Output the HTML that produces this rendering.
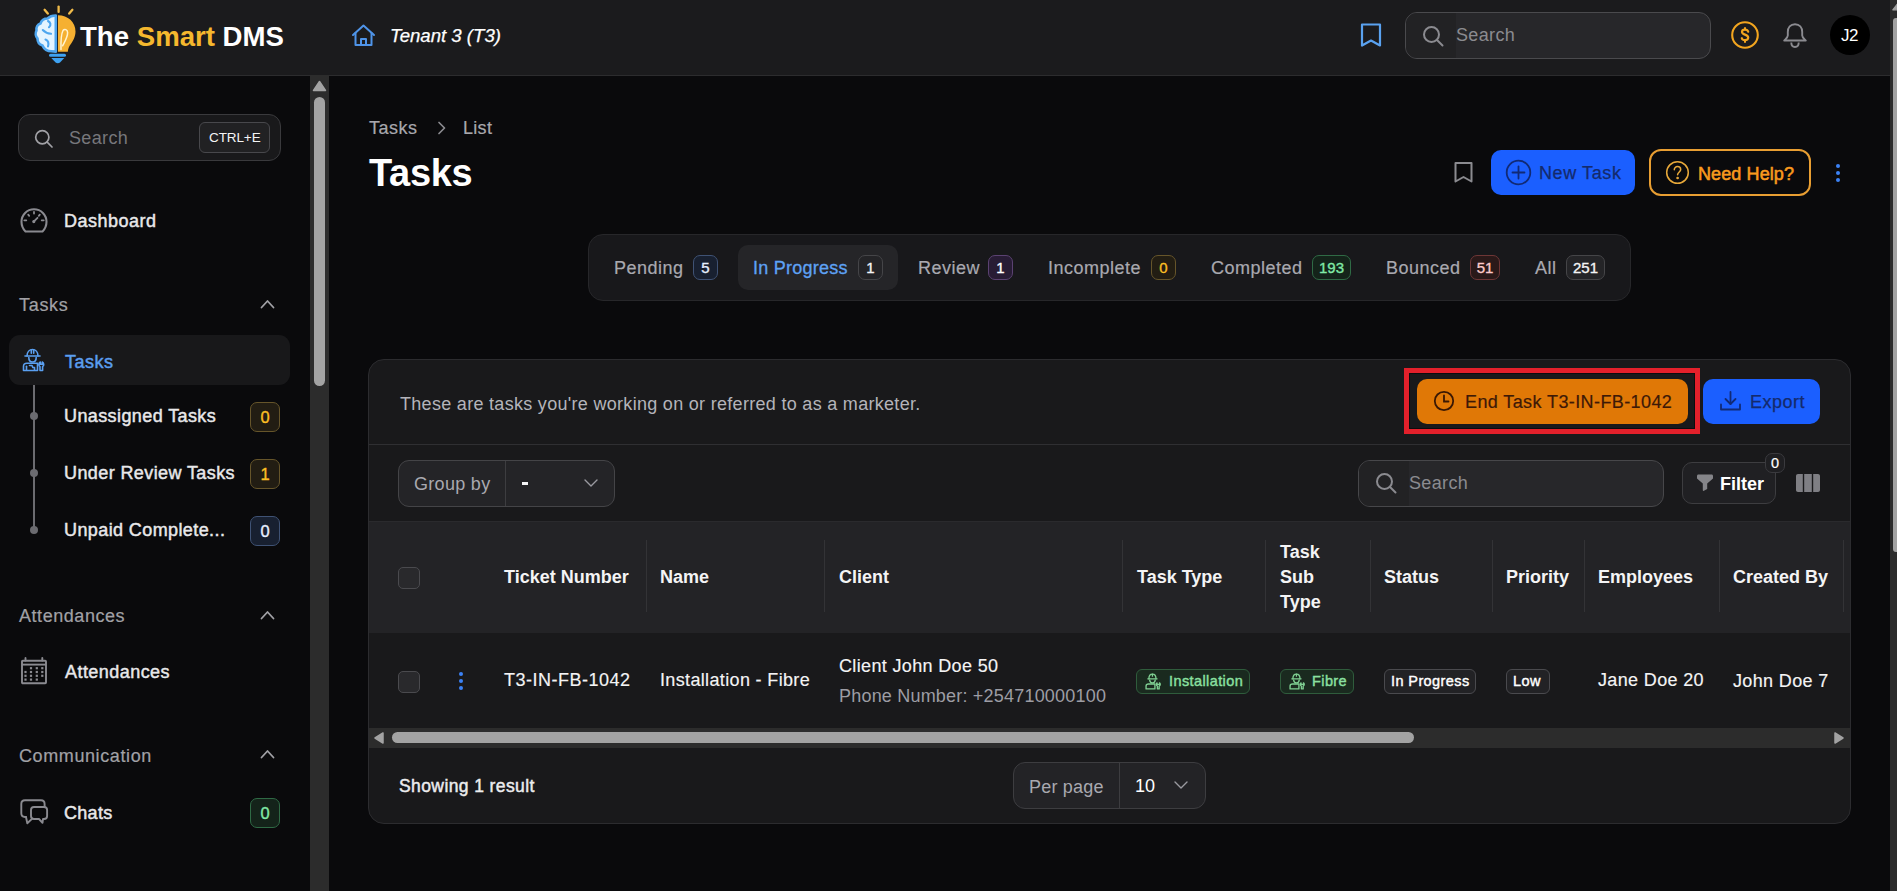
<!DOCTYPE html>
<html><head><meta charset="utf-8">
<style>
*{box-sizing:border-box;margin:0;padding:0}
html,body{width:1897px;height:891px;overflow:hidden;background:#0a0a0c;font-family:"Liberation Sans",sans-serif;color:#f4f4f5}
.abs{position:absolute}
.t{position:absolute;white-space:nowrap;line-height:1}
#hdr{position:absolute;left:0;top:0;width:1890px;height:76px;background:#1b1b1d;border-bottom:1px solid #2c2c2e}
#side{position:absolute;left:0;top:76px;width:310px;height:815px;background:#0a0a0c}
#strack{position:absolute;left:310px;top:75px;width:19px;height:816px;background:#2c2c2c}
#pstrack{position:absolute;left:1890px;top:0;width:7px;height:891px;background:#2c2c2c}
.box{position:absolute;border:1px solid #3d3d40;border-radius:12px}
.badge{position:absolute;border-radius:7px;border:1px solid;font-weight:normal;-webkit-text-stroke:0.35px currentColor;font-size:15px;display:flex;align-items:center;justify-content:center;line-height:1}
.yb{border-color:#66552a;background:#221d13;color:#fbbf24}
.bb{border-color:#3f5274;background:#182030;color:#e6efff}
.gb{border-color:#2f6a45;background:#14231a;color:#80eaa6}
.pb{border-color:#5b4272;background:#281c35;color:#fff}
.rb{border-color:#6e3636;background:#2a1919;color:#fecaca}
.th{font-size:18px;font-weight:bold;color:#f4f4f5}
.td{font-size:18px;color:#f4f4f5;letter-spacing:0.35px;-webkit-text-stroke:0.15px currentColor}
.vd{top:540px;width:1px;height:72px;background:#333336}
.cb{width:22px;height:22px;border:1px solid #4a4a4e;border-radius:5px;background:#29292c}
.tb{top:669px;height:25px;border:1px solid;border-radius:6px}
.gbadge{border-color:#2f5c3c;background:#1a2a1f}
.nbadge{border-color:#4a4a4e;background:#222225}
.bt{top:674px;font-size:14.5px;font-weight:normal;-webkit-text-stroke:0.4px currentColor;letter-spacing:0.4px}
.sb{font-weight:normal;-webkit-text-stroke:0.45px currentColor}
.tab{font-size:18px;letter-spacing:0.5px;-webkit-text-stroke:0.2px currentColor}
.nb{border-color:#454548;background:#242427;color:#f4f4f5}
</style></head><body>

<!-- HEADER -->
<div id="hdr"></div>
<div id="pstrack"></div>
<div class="abs" style="left:1893px;top:18px;width:4px;height:534px;background:#a3a3a3;border-radius:3px 0 0 3px"></div>
<svg class="abs" style="left:1890px;top:0" width="7" height="12" viewBox="0 0 7 12"><path d="M2.8 9.8 L8.5 2.5 L8.5 9.8 Z" fill="#a3a3a3" stroke="#a3a3a3" stroke-width="1.2" stroke-linejoin="round"/></svg>

<!-- logo -->
<svg class="abs" style="left:33px;top:4px" width="46" height="62" viewBox="0 0 46 62">
  <g stroke="#f0bb4a" stroke-width="2.3" stroke-linecap="round">
    <line x1="11.6" y1="5.8" x2="14.8" y2="9.6"/><line x1="25.6" y1="2.6" x2="25.6" y2="7.9"/><line x1="39.4" y1="5.8" x2="36.2" y2="9.6"/>
  </g>
  <path d="M25 11.3 C 35 11.5 42.5 18 42.5 27.5 C 42.5 33 40 37 37.5 40.5 C 36 42.5 35 45 34.8 47.8 L 25 47.8 Z" fill="#f5b031"/>
  <path d="M28 45.5 C 27.8 38 28.2 30 30 26.5 C 31.5 24.5 34.5 25.5 34.6 28.5 C 34.8 33 31.5 38 29.6 41.8" stroke="#fff3cf" stroke-width="1.5" fill="none" stroke-linecap="round"/>
  <path d="M22.8 11.5 C 19.5 11.5 16.5 12.5 14.5 14.5 C 11.5 14.5 8.5 16.5 7.5 19.5 C 4.5 20.5 3 23.5 3.5 26.5 C 2.2 29 2.5 32.5 4.5 34.5 C 4.5 38 6.5 40.5 9.5 41.5 C 11 45 14.5 47.3 18.5 47.3 L 22.8 47.6 Z" fill="#e4f4ff" stroke="#4ea6ef" stroke-width="2.6" stroke-linejoin="round"/>
  <path d="M15 17 C 17.5 18.5 18.5 21 16 23.2 M 9.8 26 C 12 28.5 15 29.5 18 29.8 M 12.5 35.5 C 15 36.5 16 39 15 42.5" stroke="#4ea6ef" stroke-width="2.1" fill="none" stroke-linecap="round"/>
  <rect x="16" y="49.8" width="17" height="3" rx="1.5" fill="#3ea2f2"/>
  <path d="M18.3 54 L31.3 54 L27 58.6 C 25.8 59.6 23.8 59.6 22.6 58.6 Z" fill="#3ea2f2"/>
</svg>
<div class="t" style="left:80px;top:23px;font-size:27.6px;font-weight:bold;color:#fff">The <span style="color:#f5b82e">Smart</span> DMS</div>

<!-- home -->
<svg class="abs" style="left:351px;top:24px" width="25" height="23" viewBox="0 0 25 23" fill="none" stroke="#4f94e8" stroke-width="2" stroke-linejoin="round" stroke-linecap="round">
  <path d="M2 11 L12.5 1.5 L23 11"/><path d="M4.5 9 V21 H20.5 V9"/><path d="M10 21 V15 H15 V21"/>
</svg>
<div class="t" style="left:390px;top:27px;font-size:18.6px;font-style:italic;color:#fff;-webkit-text-stroke:0.25px #fff">Tenant 3 (T3)</div>

<!-- bookmark blue -->
<svg class="abs" style="left:1359px;top:22px" width="24" height="26" viewBox="0 0 24 26" fill="none" stroke="#5aa2f0" stroke-width="2.2" stroke-linejoin="round">
  <path d="M3 2.5 H21 V23.5 L12 18.5 L3 23.5 Z"/>
</svg>
<!-- header search -->
<div class="box" style="left:1405px;top:12px;width:306px;height:47px;background:#27272a;border-color:#4a4a4d"></div>
<div class="abs" style="left:1406px;top:13px;width:50px;height:45px;background:#222224;border-radius:11px 0 0 11px"></div>
<svg class="abs" style="left:1422px;top:25px" width="23" height="22" viewBox="0 0 23 22" fill="none" stroke="#8b8b90" stroke-width="2" stroke-linecap="round">
  <circle cx="9.5" cy="9.5" r="7.5"/><line x1="15" y1="15" x2="20.5" y2="20.5"/>
</svg>
<div class="t" style="left:1456px;top:26px;font-size:18px;letter-spacing:0.35px;color:#8b8b90">Search</div>

<!-- dollar -->
<svg class="abs" style="left:1730px;top:20px" width="30" height="30" viewBox="0 0 30 30" fill="none" stroke="#f2a51f" stroke-width="2.1" stroke-linecap="round">
  <circle cx="15" cy="15" r="12.8"/>
  <path d="M18.2 11.8 C 17.8 10.4 16.6 9.7 15 9.7 C 13.2 9.7 12 10.6 12 12 C 12 15 18.2 14.3 18.2 17.6 C 18.2 19.1 16.9 20.2 15 20.2 C 13.3 20.2 12.2 19.5 11.8 18.2" stroke-width="2.2"/>
  <line x1="15" y1="8" x2="15" y2="9.4" stroke-width="2"/><line x1="15" y1="20.6" x2="15" y2="22" stroke-width="2"/>
</svg>
<!-- bell -->
<svg class="abs" style="left:1782px;top:23px" width="26" height="27" viewBox="0 0 26 27" fill="none" stroke="#8b8b90" stroke-width="1.9" stroke-linejoin="round">
  <path d="M13 1.2 C 8.5 1.2 5.8 4.5 5.8 9 V12.5 C 5.8 14.5 3.5 16 2.2 17.5 H23.8 C 22.5 16 20.2 14.5 20.2 12.5 V9 C 20.2 4.5 17.5 1.2 13 1.2 Z"/>
  <path d="M9.3 19.5 C 9.3 22.3 10.9 24 13 24 C 15.1 24 16.7 22.3 16.7 19.5"/>
</svg>
<!-- avatar -->
<div class="abs" style="left:1830px;top:15px;width:40px;height:40px;border-radius:50%;background:#000"></div>
<div class="t" style="left:1841px;top:27px;font-size:17px;color:#fff;letter-spacing:-0.5px">J2</div>

<!-- SIDEBAR -->
<div id="side"></div>
<div id="strack"></div>
<svg class="abs" style="left:312px;top:80px" width="15" height="12" viewBox="0 0 15 12"><path d="M7.5 1.5 L13.5 10.5 H1.5 Z" fill="#a3a3a3" stroke="#a3a3a3" stroke-width="1.5" stroke-linejoin="round"/></svg>
<div class="abs" style="left:314px;top:97px;width:11px;height:289px;background:#a3a3a3;border-radius:6px"></div>

<!-- sidebar search -->
<div class="box" style="left:18px;top:114px;width:263px;height:47px;background:#19191b;border-color:#3a3a3d"></div>
<svg class="abs" style="left:34px;top:129px" width="20" height="19" viewBox="0 0 20 19" fill="none" stroke="#a1a1a6" stroke-width="1.7" stroke-linecap="round">
  <circle cx="8.3" cy="8.3" r="6.6"/><line x1="13.2" y1="13.2" x2="18" y2="18"/>
</svg>
<div class="t" style="left:69px;top:129px;font-size:18px;letter-spacing:0.35px;color:#77777c">Search</div>
<div class="abs" style="left:199px;top:122px;width:71px;height:31px;border:1px solid #48484c;border-radius:6px;background:#212123"></div>
<div class="t" style="left:209px;top:131px;font-size:13.5px;color:#f4f4f5;letter-spacing:-0.1px">CTRL+E</div>

<!-- dashboard -->
<svg class="abs" style="left:20px;top:208px" width="28" height="26" viewBox="0 0 28 26" fill="none" stroke="#8a8a90" stroke-width="2.1" stroke-linecap="round">
  <path d="M5.5 23.5 C 3 21 1.5 17.5 1.5 13.8 C 1.5 6.8 7 1.3 14 1.3 C 21 1.3 26.5 6.8 26.5 13.8 C 26.5 17.5 25 21 22.5 23.5 Z"/>
  <line x1="14" y1="3.9" x2="14" y2="5.6" stroke-width="1.8"/><line x1="8.2" y1="6.6" x2="9.2" y2="7.8" stroke-width="1.8"/><line x1="19.8" y1="6.6" x2="18.8" y2="7.8" stroke-width="1.8"/>
  <line x1="4.3" y1="12.3" x2="6.3" y2="12.3" stroke-width="1.8"/><line x1="21.7" y1="12.3" x2="23.7" y2="12.3" stroke-width="1.8"/>
  <line x1="14.2" y1="13.2" x2="17.5" y2="9.8" stroke-width="1.8"/><circle cx="13.8" cy="13.6" r="1" fill="#8a8a90" stroke-width="1.2"/>
</svg>
<div class="t sb" style="left:64px;top:212px;font-size:18px;letter-spacing:0.5px;color:#e8e8ea">Dashboard</div>

<!-- Tasks section -->
<div class="t" style="left:19px;top:296px;-webkit-text-stroke:0.2px #a1a1a6;font-size:18px;letter-spacing:0.7px;color:#a1a1a6">Tasks</div>
<svg class="abs" style="left:259px;top:298px" width="17" height="12" viewBox="0 0 17 12" fill="none" stroke="#a1a1a6" stroke-width="1.8" stroke-linecap="round" stroke-linejoin="round"><path d="M2.5 9.5 L8.5 3 L14.5 9.5"/></svg>
<div class="abs" style="left:9px;top:335px;width:281px;height:50px;background:#18181a;border-radius:11px"></div>
<svg class="abs" style="left:22px;top:348px" width="24" height="24" viewBox="0 0 24 24" fill="none" stroke="#5a9ff0" stroke-width="1.6" stroke-linejoin="round" stroke-linecap="round">
  <path d="M5 8 C 5 4 7.5 1.5 10.5 1.5 C 13.5 1.5 16 4 16 8"/>
  <path d="M3 8 H18"/><path d="M9.3 2 V5.2 M11.7 2 V5.2"/>
  <path d="M6.8 9.5 C 6.8 12.5 8.5 14 10.5 14 C 12.5 14 14.2 12.5 14.2 9.5"/>
  <path d="M1.5 22.5 V18.5 C 1.5 16.5 3 15.3 5 15.3 H15.5 V22.5 Z"/>
  <path d="M4.5 18.3 V22" /><path d="M7.5 17.5 H10 L10.8 19.5 H12.5 V22"/>
  <path d="M18.3 14 C 16.6 14.8 16.3 17.6 18 18.6 V22.5 H20.6 V18.6 C 22.3 17.6 22 14.8 20.3 14 V16.3 H18.3 Z"/>
</svg>
<div class="t sb" style="left:65px;top:353px;font-size:18px;letter-spacing:0.5px;color:#5b9ef0">Tasks</div>
<div class="abs" style="left:33px;top:385px;width:2px;height:145px;background:#6b6b70"></div>
<div class="abs" style="left:30px;top:412px;width:8px;height:8px;border-radius:50%;background:#6b6b70"></div>
<div class="abs" style="left:30px;top:469px;width:8px;height:8px;border-radius:50%;background:#6b6b70"></div>
<div class="abs" style="left:30px;top:526px;width:8px;height:8px;border-radius:50%;background:#6b6b70"></div>
<div class="t sb" style="left:64px;top:407px;font-size:18px;letter-spacing:0.4px;color:#e8e8ea">Unassigned Tasks</div>
<div class="t sb" style="left:64px;top:464px;font-size:18px;letter-spacing:0.4px;color:#e8e8ea">Under Review Tasks</div>
<div class="t sb" style="left:64px;top:521px;font-size:18px;letter-spacing:0.4px;color:#e8e8ea">Unpaid Complete...</div>
<div class="badge yb" style="left:250px;top:402px;width:30px;height:30px;font-size:16.5px">0</div>
<div class="badge yb" style="left:250px;top:459px;width:30px;height:30px;font-size:16.5px">1</div>
<div class="badge bb" style="left:250px;top:516px;width:30px;height:30px;font-size:16.5px">0</div>

<!-- Attendances -->
<div class="t" style="left:19px;top:607px;-webkit-text-stroke:0.2px #a1a1a6;font-size:18px;letter-spacing:0.55px;color:#a1a1a6">Attendances</div>
<svg class="abs" style="left:259px;top:609px" width="17" height="12" viewBox="0 0 17 12" fill="none" stroke="#a1a1a6" stroke-width="1.8" stroke-linecap="round" stroke-linejoin="round"><path d="M2.5 9.5 L8.5 3 L14.5 9.5"/></svg>
<svg class="abs" style="left:20px;top:656px" width="28" height="30" viewBox="0 0 28 30" fill="none" stroke="#8a8a90" stroke-width="1.9">
  <rect x="2" y="4.7" width="24" height="22.6" rx="0.8"/><line x1="2" y1="8.6" x2="26" y2="8.6"/>
  <line x1="5.5" y1="2" x2="5.5" y2="4.5" stroke-linecap="round"/><line x1="22.3" y1="2" x2="22.3" y2="4.5" stroke-linecap="round"/>
  <g fill="#8a8a90" stroke="none"><rect x="9.9" y="11.1" width="2.2" height="2.2"/><rect x="15.7" y="11.1" width="2.2" height="2.2"/><rect x="21.2" y="11.1" width="2.2" height="2.2"/><rect x="4.4" y="14.9" width="2.2" height="2.2"/><rect x="9.9" y="14.9" width="2.2" height="2.2"/><rect x="15.7" y="14.9" width="2.2" height="2.2"/><rect x="21.2" y="14.9" width="2.2" height="2.2"/><rect x="4.4" y="18.7" width="2.2" height="2.2"/><rect x="9.9" y="18.7" width="2.2" height="2.2"/><rect x="15.7" y="18.7" width="2.2" height="2.2"/><rect x="21.2" y="18.7" width="2.2" height="2.2"/><rect x="4.4" y="22.5" width="2.2" height="2.2"/><rect x="9.9" y="22.5" width="2.2" height="2.2"/><rect x="15.7" y="22.5" width="2.2" height="2.2"/></g>
</svg>
<div class="t sb" style="left:65px;top:663px;font-size:18px;letter-spacing:0.45px;color:#e8e8ea">Attendances</div>

<!-- Communication -->
<div class="t" style="left:19px;top:747px;-webkit-text-stroke:0.2px #a1a1a6;font-size:18px;letter-spacing:0.6px;color:#a1a1a6">Communication</div>
<svg class="abs" style="left:259px;top:748px" width="17" height="12" viewBox="0 0 17 12" fill="none" stroke="#a1a1a6" stroke-width="1.8" stroke-linecap="round" stroke-linejoin="round"><path d="M2.5 9.5 L8.5 3 L14.5 9.5"/></svg>
<svg class="abs" style="left:20px;top:799px" width="29" height="27" viewBox="0 0 29 27" fill="none" stroke="#8a8a90" stroke-width="1.9" stroke-linejoin="round" stroke-linecap="round">
  <path d="M6 18 H5 C 2.8 18 1.3 16.5 1.3 14.3 V5 C 1.3 2.8 2.8 1.3 5 1.3 H21 C 23.2 1.3 24.6 2.8 24.6 5 V8"/>
  <path d="M6 18 L7.3 24.3 L12.2 19.6"/>
  <path d="M14 8 H24 C 25.8 8 27.1 9.3 27.1 11 V17 C 27.1 18.7 25.8 20 24 20 H23 L22.5 23.8 L19 20 H14 C 12.2 20 11 18.7 11 17 V11 C 11 9.3 12.2 8 14 8 Z"/>
</svg>
<div class="t sb" style="left:64px;top:804px;font-size:18px;letter-spacing:0.3px;color:#e8e8ea">Chats</div>
<div class="badge gb" style="left:250px;top:798px;width:30px;height:30px;font-size:16.5px">0</div>

<!-- MAIN -->
<div class="t" style="left:369px;top:119px;font-size:18px;letter-spacing:0.5px;color:#a8a8ae;-webkit-text-stroke:0.2px #a8a8ae">Tasks</div>
<svg class="abs" style="left:436px;top:120px" width="12" height="16" viewBox="0 0 12 16" fill="none" stroke="#8b8b90" stroke-width="1.7" stroke-linecap="round" stroke-linejoin="round"><path d="M3 2.5 L8.5 8 L3 13.5"/></svg>
<div class="t" style="left:463px;top:119px;font-size:18px;letter-spacing:0.3px;color:#a8a8ae;-webkit-text-stroke:0.2px #a8a8ae">List</div>
<div class="t" style="left:369px;top:154px;font-size:38px;font-weight:bold;color:#fff;letter-spacing:-0.3px">Tasks</div>

<!-- bookmark gray -->
<svg class="abs" style="left:1453px;top:161px" width="21" height="23" viewBox="0 0 21 23" fill="none" stroke="#8b8b90" stroke-width="2" stroke-linejoin="round">
  <path d="M2.5 2 H18.5 V20.5 L10.5 16 L2.5 20.5 Z"/>
</svg>
<!-- New Task -->
<div class="abs" style="left:1491px;top:150px;width:144px;height:45px;background:#1b5fff;border-radius:10px"></div>
<svg class="abs" style="left:1505px;top:159px" width="27" height="27" viewBox="0 0 27 27" fill="none" stroke="#112a75" stroke-width="1.8" stroke-linecap="round">
  <circle cx="13.5" cy="13.5" r="11.8"/><line x1="13.5" y1="7.5" x2="13.5" y2="19.5"/><line x1="7.5" y1="13.5" x2="19.5" y2="13.5"/>
</svg>
<div class="t" style="left:1539px;top:164px;font-size:18px;letter-spacing:0.6px;color:#142a6c;-webkit-text-stroke:0.25px #142a6c">New Task</div>
<!-- Need Help -->
<div class="abs" style="left:1649px;top:149px;width:162px;height:47px;border:2px solid #e89e32;border-radius:12px;background:#0a0a0c"></div>
<svg class="abs" style="left:1665px;top:160px" width="25" height="25" viewBox="0 0 25 25" fill="none" stroke="#e8a93a" stroke-width="1.5" stroke-linecap="round">
  <circle cx="12.5" cy="12.5" r="10.8"/>
  <path d="M9.3 9.8 C 9.3 7.8 10.7 6.6 12.5 6.6 C 14.3 6.6 15.7 7.8 15.7 9.6 C 15.7 11.8 12.6 12.2 12.6 14.8"/>
  <circle cx="12.6" cy="18" r="0.6" fill="#e8a93a"/>
</svg>
<div class="t sb" style="left:1698px;top:165px;font-size:18px;letter-spacing:0.1px;color:#f99a1e;-webkit-text-stroke:0.55px #f99a1e">Need Help?</div>
<div class="abs" style="left:1835.5px;top:163.5px;width:4.2px;height:4.2px;border-radius:50%;background:#3b82f6"></div>
<div class="abs" style="left:1835.5px;top:170.5px;width:4.2px;height:4.2px;border-radius:50%;background:#3b82f6"></div>
<div class="abs" style="left:1835.5px;top:177.5px;width:4.2px;height:4.2px;border-radius:50%;background:#3b82f6"></div>

<!-- TABS -->
<div class="abs" style="left:588px;top:234px;width:1043px;height:67px;background:#18181b;border:1px solid #27272a;border-radius:15px"></div>
<div class="abs" style="left:738px;top:245px;width:160px;height:45px;background:#252528;border-radius:10px"></div>
<div class="t tab" style="left:614px;top:259px;color:#a9a9b0">Pending</div>
<div class="badge bb" style="left:693px;top:255px;width:25px;height:25px">5</div>
<div class="t tab" style="left:753px;top:259px;color:#5ea2f5;letter-spacing:0.25px;-webkit-text-stroke:0.3px #5ea2f5">In Progress</div>
<div class="badge nb" style="left:858px;top:255px;width:25px;height:25px">1</div>
<div class="t tab" style="left:918px;top:259px;color:#a9a9b0">Review</div>
<div class="badge pb" style="left:988px;top:255px;width:25px;height:25px">1</div>
<div class="t tab" style="left:1048px;top:259px;color:#a9a9b0">Incomplete</div>
<div class="badge yb" style="left:1151px;top:255px;width:25px;height:25px">0</div>
<div class="t tab" style="left:1211px;top:259px;color:#a9a9b0">Completed</div>
<div class="badge gb" style="left:1312px;top:255px;width:39px;height:25px">193</div>
<div class="t tab" style="left:1386px;top:259px;color:#a9a9b0">Bounced</div>
<div class="badge rb" style="left:1470px;top:255px;width:30px;height:25px">51</div>
<div class="t tab" style="left:1535px;top:259px;color:#a9a9b0">All</div>
<div class="badge nb" style="left:1566px;top:255px;width:39px;height:25px">251</div>

<!-- CARD -->
<div class="abs" style="left:368px;top:359px;width:1483px;height:465px;background:#19191b;border:1px solid #2c2c2f;border-radius:16px;overflow:hidden">
  <div class="abs" style="left:0;top:84px;width:1483px;height:1px;background:#2f2f32"></div>
  <div class="abs" style="left:0;top:161px;width:1483px;height:112px;background:#232326;border-top:1px solid #2a2a2d"></div>
  <div class="abs" style="left:0;top:368px;width:1483px;height:20px;background:#2c2c2c"></div>
</div>
<div class="t" style="left:400px;top:395px;font-size:18px;letter-spacing:0.3px;color:#b4b4ba">These are tasks you're working on or referred to as a marketer.</div>

<!-- red annotation + End Task -->
<div class="abs" style="left:1404px;top:368px;width:296px;height:66px;border:5px solid #e3202b"></div>
<div class="abs" style="left:1409px;top:373px;width:286px;height:56px;border:1px solid #0c0c0e"></div>
<div class="abs" style="left:1417px;top:379px;width:271px;height:45px;background:#e07806;border-radius:10px"></div>
<svg class="abs" style="left:1433px;top:390px" width="22" height="22" viewBox="0 0 22 22" fill="none" stroke="#3a1804" stroke-width="1.8" stroke-linecap="round">
  <circle cx="11" cy="11" r="9.2"/><path d="M11 5.5 V11.5 H15.5"/>
</svg>
<div class="t" style="left:1465px;top:393px;font-size:18px;color:#3d1906;letter-spacing:0.4px;-webkit-text-stroke:0.2px #3d1906">End Task T3-IN-FB-1042</div>
<!-- Export -->
<div class="abs" style="left:1703px;top:379px;width:117px;height:45px;background:#1b5fff;border-radius:10px"></div>
<svg class="abs" style="left:1719px;top:390px" width="23" height="22" viewBox="0 0 23 22" fill="none" stroke="#112a75" stroke-width="1.8" stroke-linecap="round" stroke-linejoin="round">
  <path d="M11.5 2 V14"/><path d="M6.5 9 L11.5 14 L16.5 9"/><path d="M2 14.5 V19.5 H21 V14.5"/>
</svg>
<div class="t" style="left:1750px;top:393px;font-size:18px;letter-spacing:0.5px;color:#142a6c;-webkit-text-stroke:0.25px #142a6c">Export</div>

<!-- toolbar -->
<div class="box" style="left:398px;top:460px;width:217px;height:47px;background:#242427;border-color:#444447;border-radius:11px"></div>
<div class="abs" style="left:505px;top:461px;width:1px;height:45px;background:#3d3d40"></div>
<div class="t" style="left:414px;top:475px;font-size:18px;letter-spacing:0.3px;color:#a9a9b0">Group by</div>
<div class="abs" style="left:521.8px;top:482.4px;width:6.5px;height:2.4px;background:#f4f4f5"></div>
<svg class="abs" style="left:583px;top:477px" width="16" height="12" viewBox="0 0 16 12" fill="none" stroke="#9a9aa0" stroke-width="1.4" stroke-linecap="round" stroke-linejoin="round"><path d="M2 3 L8 9 L14 3"/></svg>

<div class="box" style="left:1358px;top:460px;width:306px;height:47px;background:#27272a;border-color:#47474a"></div>
<div class="abs" style="left:1359px;top:461px;width:50px;height:45px;background:#222224;border-radius:11px 0 0 11px"></div>
<svg class="abs" style="left:1375px;top:472px" width="23" height="22" viewBox="0 0 23 22" fill="none" stroke="#8b8b90" stroke-width="2" stroke-linecap="round">
  <circle cx="9.5" cy="9.5" r="7.5"/><line x1="15" y1="15" x2="20.5" y2="20.5"/>
</svg>
<div class="t" style="left:1409px;top:474px;font-size:18px;letter-spacing:0.35px;color:#8b8b90">Search</div>

<div class="box" style="left:1682px;top:462px;width:94px;height:42px;background:#202023;border-color:#3d3d40;border-radius:10px"></div>
<svg class="abs" style="left:1696px;top:473px" width="18" height="19" viewBox="0 0 18 19"><path d="M2.5 1.5 H15.5 C 16.5 1.5 17 2.2 17 3 V5.5 L11.2 10.5 V16 L7.5 18 C 7 18 6.8 17.6 6.8 17 V10.5 L1 5.5 V3 C 1 2.2 1.5 1.5 2.5 1.5 Z" fill="#858589"/></svg>
<div class="t" style="left:1720px;top:475px;font-size:18px;font-weight:bold;color:#fff">Filter</div>
<div class="abs" style="left:1765px;top:453px;width:20px;height:20px;border-radius:7px;background:#1f1f22;border:1px solid #3a3a3e"></div>
<div class="t" style="left:1771px;top:456px;font-size:14.5px;color:#fff;-webkit-text-stroke:0.2px #fff">0</div>
<svg class="abs" style="left:1796px;top:474px" width="24" height="18" viewBox="0 0 24 18" fill="#7f7f84">
  <path d="M2 0 H6.8 V18 H2 C 0.9 18 0 17.1 0 16 V2 C 0 0.9 0.9 0 2 0 Z"/><rect x="8.2" y="0" width="7.6" height="18"/><path d="M17.2 0 H22 C 23.1 0 24 0.9 24 2 V16 C 24 17.1 23.1 18 22 18 H17.2 Z"/>
</svg>

<!-- TABLE HEADER -->
<div class="abs cb" style="left:398px;top:567px"></div>
<div class="t th" style="left:504px;top:568px">Ticket Number</div>
<div class="abs vd" style="left:646px"></div>
<div class="t th" style="left:660px;top:568px">Name</div>
<div class="abs vd" style="left:824px"></div>
<div class="t th" style="left:839px;top:568px">Client</div>
<div class="abs vd" style="left:1122px"></div>
<div class="t th" style="left:1137px;top:568px">Task Type</div>
<div class="abs vd" style="left:1265px"></div>
<div class="t th" style="left:1280px;top:540px;line-height:25px">Task<br>Sub<br>Type</div>
<div class="abs vd" style="left:1370px"></div>
<div class="t th" style="left:1384px;top:568px">Status</div>
<div class="abs vd" style="left:1492px"></div>
<div class="t th" style="left:1506px;top:568px">Priority</div>
<div class="abs vd" style="left:1584px"></div>
<div class="t th" style="left:1598px;top:568px">Employees</div>
<div class="abs vd" style="left:1719px"></div>
<div class="t th" style="left:1733px;top:568px">Created By</div>
<div class="abs vd" style="left:1843px"></div>

<!-- ROW -->
<div class="abs cb" style="left:398px;top:671px"></div>
<div class="abs" style="left:459px;top:672px;width:4px;height:4px;border-radius:50%;background:#3b82f6"></div>
<div class="abs" style="left:459px;top:679px;width:4px;height:4px;border-radius:50%;background:#3b82f6"></div>
<div class="abs" style="left:459px;top:686px;width:4px;height:4px;border-radius:50%;background:#3b82f6"></div>
<div class="t td" style="left:504px;top:671px;letter-spacing:0.5px">T3-IN-FB-1042</div>
<div class="t td" style="left:660px;top:671px">Installation - Fibre</div>
<div class="t td" style="left:839px;top:657px">Client John Doe 50</div>
<div class="t" style="left:839px;top:687px;font-size:18px;letter-spacing:0.2px;color:#9d9da4">Phone Number: +254710000100</div>

<div class="abs tb gbadge" style="left:1136px;width:114px"></div>
<svg class="abs" style="left:1145px;top:673px" width="17" height="17" viewBox="0 0 24 24" fill="none" stroke="#7fcf92" stroke-width="1.9" stroke-linejoin="round" stroke-linecap="round">
  <path d="M5.5 8.2 C 5.5 4 8 1.6 10.5 1.6 C 13 1.6 15.5 4 15.5 8.2"/><path d="M4 8.2 H17"/><path d="M10.5 1.8 V4.5"/>
  <path d="M6.6 10 C 7 13 8.5 14 10.5 14 C 12.5 14 14 13 14.4 10"/>
  <path d="M1.5 22.5 V18.5 C 1.5 16.5 3 15.5 5 15.5 H14 V22.5 Z"/>
  <path d="M17 14 C 15.5 15 15.5 17.5 17.5 18.5 V22.5 H20 V18.5 C 22 17.5 22 15 20.5 14 V16 H17 Z"/>
</svg>
<div class="t bt" style="left:1169px;color:#8ae0a0">Installation</div>
<div class="abs tb gbadge" style="left:1280px;width:74px"></div>
<svg class="abs" style="left:1289px;top:673px" width="17" height="17" viewBox="0 0 24 24" fill="none" stroke="#7fcf92" stroke-width="1.9" stroke-linejoin="round" stroke-linecap="round">
  <path d="M5.5 8.2 C 5.5 4 8 1.6 10.5 1.6 C 13 1.6 15.5 4 15.5 8.2"/><path d="M4 8.2 H17"/><path d="M10.5 1.8 V4.5"/>
  <path d="M6.6 10 C 7 13 8.5 14 10.5 14 C 12.5 14 14 13 14.4 10"/>
  <path d="M1.5 22.5 V18.5 C 1.5 16.5 3 15.5 5 15.5 H14 V22.5 Z"/>
  <path d="M17 14 C 15.5 15 15.5 17.5 17.5 18.5 V22.5 H20 V18.5 C 22 17.5 22 15 20.5 14 V16 H17 Z"/>
</svg>
<div class="t bt" style="left:1312px;color:#8ae0a0">Fibre</div>
<div class="abs tb nbadge" style="left:1384px;width:92px"></div>
<div class="t bt" style="left:1391px;color:#fff">In Progress</div>
<div class="abs tb nbadge" style="left:1506px;width:44px"></div>
<div class="t bt" style="left:1513px;color:#fff">Low</div>
<div class="t td" style="left:1598px;top:671px">Jane Doe 20</div>
<div class="t td" style="left:1733px;top:672px">John Doe 7</div>

<!-- h scrollbar -->
<svg class="abs" style="left:373px;top:731px" width="12" height="14" viewBox="0 0 12 14"><path d="M2 7 L10 2 V12 Z" fill="#a3a3a3" stroke="#a3a3a3" stroke-width="1.5" stroke-linejoin="round"/></svg>
<div class="abs" style="left:392px;top:732px;width:1022px;height:11px;background:#a3a3a3;border-radius:6px"></div>
<svg class="abs" style="left:1833px;top:731px" width="12" height="14" viewBox="0 0 12 14"><path d="M10 7 L2 2 V12 Z" fill="#a3a3a3" stroke="#a3a3a3" stroke-width="1.5" stroke-linejoin="round"/></svg>

<!-- footer -->
<div class="t sb" style="left:399px;top:778px;font-size:17.5px;letter-spacing:0.4px;color:#ececee">Showing 1 result</div>
<div class="box" style="left:1013px;top:762px;width:193px;height:47px;background:#232326;border-color:#3d3d40;border-radius:12px"></div>
<div class="abs" style="left:1119px;top:763px;width:1px;height:45px;background:#3d3d40"></div>
<div class="t" style="left:1029px;top:778px;font-size:18px;letter-spacing:0.2px;color:#a9a9b0">Per page</div>
<div class="t" style="left:1135px;top:777px;font-size:18px;color:#fff">10</div>
<svg class="abs" style="left:1173px;top:779px" width="16" height="12" viewBox="0 0 16 12" fill="none" stroke="#9a9aa0" stroke-width="1.4" stroke-linecap="round" stroke-linejoin="round"><path d="M2 3 L8 9 L14 3"/></svg>
</body></html>
